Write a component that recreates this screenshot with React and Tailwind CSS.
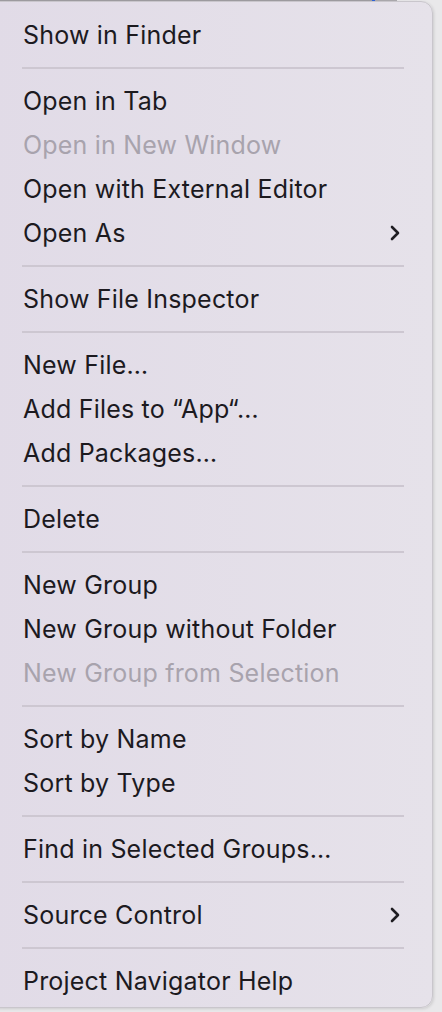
import React from 'react';

const items = [
  { label: 'Show in Finder' },
  { sep: true },
  { label: 'Open in Tab' },
  { label: 'Open in New Window', disabled: true },
  { label: 'Open with External Editor' },
  { label: 'Open As', submenu: true },
  { sep: true },
  { label: 'Show File Inspector' },
  { sep: true },
  { label: 'New File…' },
  { label: 'Add Files to “App“…' },
  { label: 'Add Packages…' },
  { sep: true },
  { label: 'Delete' },
  { sep: true },
  { label: 'New Group' },
  { label: 'New Group without Folder' },
  { label: 'New Group from Selection', disabled: true },
  { sep: true },
  { label: 'Sort by Name' },
  { label: 'Sort by Type' },
  { sep: true },
  { label: 'Find in Selected Groups…' },
  { sep: true },
  { label: 'Source Control', submenu: true },
  { sep: true },
  { label: 'Project Navigator Help' },
];

const Chevron = () => (
  <svg width="12" height="16" viewBox="0 0 12 16" fill="none">
    <path d="M3 2 L9 8 L3 14" stroke="#1f1d22" strokeWidth="2.6" strokeLinecap="round" strokeLinejoin="round" />
  </svg>
);

const MenuRow = ({ item }) => {
  if (item.sep) {
    return (
      <div className="h-[22px] flex items-center pl-[21px] pr-[28px]">
        <div className="h-[2px] w-full bg-[#cdc7d1]" />
      </div>
    );
  }
  return (
    <div className="h-[44px] flex items-center justify-between pl-[22px] pr-[31px]">
      <span className={item.disabled ? 'text-[#a8a3ad]' : 'text-[#1c1a1f]'}>{item.label}</span>
      {item.submenu && <Chevron />}
    </div>
  );
};

export default function App() {
  return (
    <div className="w-[442px] h-[1012px] bg-[#e9e8ea] overflow-hidden" style={{ fontFamily: 'Inter, "Noto Sans", sans-serif' }}>
      <div className="flex h-[1px]">
        <div className="w-[372px] bg-[#9c9a9e]" />
        <div className="w-[3px] bg-[#2f62d6]" />
        <div className="w-[22px] bg-[#a9a7ab]" />
      </div>
      <div className="-ml-[12px] w-[445px] rounded-[12px] bg-gradient-to-r from-[#e1dbe7] to-[#e6e2ea] border border-[#c9c6cc] pt-[11px] pb-[4px] text-[25px] leading-none tracking-[0.2px] shadow-[1px_1px_3px_rgba(0,0,0,0.12)]">
        {items.map((item, i) => (
          <div key={i} className="pl-[12px]">
            <MenuRow item={item} />
          </div>
        ))}
      </div>
    </div>
  );
}
